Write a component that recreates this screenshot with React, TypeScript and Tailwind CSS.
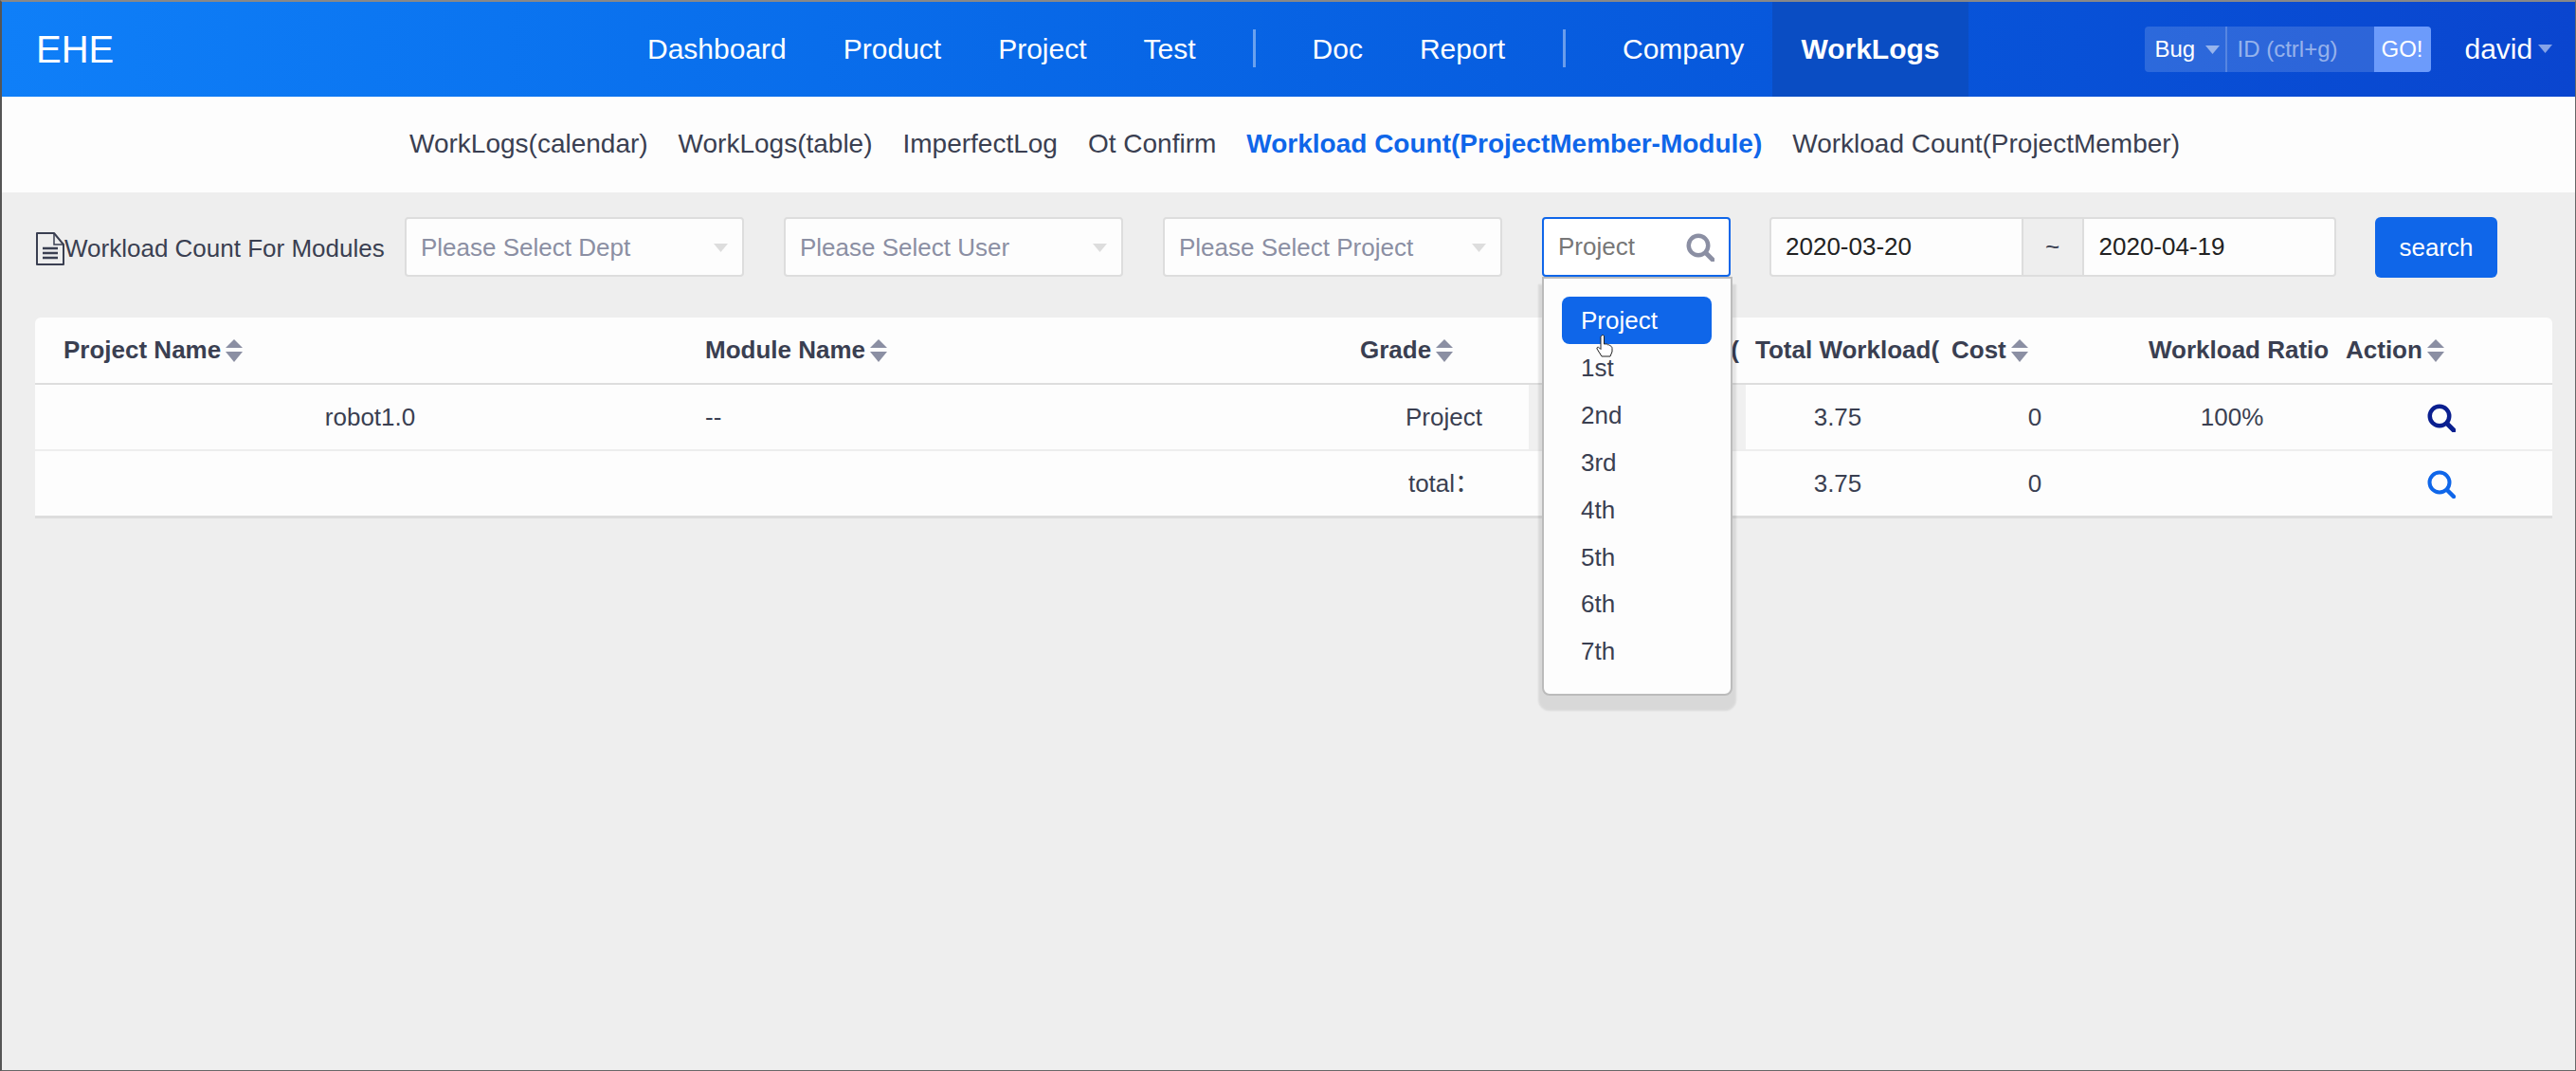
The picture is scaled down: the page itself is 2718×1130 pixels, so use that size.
const navLeft = ['Dashboard', 'Product', 'Project', 'Test']
const navMid = ['Doc', 'Report']
const levels = ['1st', '2nd', '3rd', '4th', '5th', '6th', '7th']
const gridCols = 'grid grid-cols-[677px_690px_209px_229px_208px_208px_208px_227px]'

const SortIcon = () => (
  <svg width="18" height="24" viewBox="0 0 18 24" className="ml-[5px] shrink-0">
    <path d="M9 0 L18 9 H0 Z" fill="#8b8fa3" />
    <path d="M9 24 L18 13 H0 Z" fill="#8b8fa3" />
  </svg>
)

const SearchIcon = ({ color, stroke, size }: { color: string; stroke: number; size: number }) => (
  <svg width={size} height={size} viewBox="0 0 30 30" fill="none">
    <circle cx="13" cy="13" r={12.5 - stroke / 2} stroke={color} strokeWidth={stroke} />
    <path d="M21 21 L28 28" stroke={color} strokeWidth={stroke + 0.5} strokeLinecap="round" />
  </svg>
)

const Caret = ({ className }: { className: string }) => (
  <svg width="15" height="9" viewBox="0 0 15 9" className={className}>
    <path d="M0 0 H15 L7.5 9 Z" fill="currentColor" />
  </svg>
)

const DocIcon = () => (
  <svg width="31" height="35" viewBox="0 0 31 35" fill="none" className="shrink-0">
    <path d="M2 1 H20 L30 13 V34 H2 Z" stroke="#3a3f51" strokeWidth="2" strokeLinejoin="round" />
    <path d="M20 1 V13 H30" stroke="#3a3f51" strokeWidth="1.5" />
    <path d="M8 17 H24 M8 22 H24 M8 27 H24" stroke="#3a3f51" strokeWidth="2.5" />
  </svg>
)

const HandCursor = () => (
  <svg width="18" height="24" viewBox="0 0 18 24" className="absolute left-[36px] top-[40px]">
    <path
      d="M6 1 C7 0 8.500 0.500 8.500 2 V10 L10 10 C11 9.500 12 10 12.500 11 C13.500 10.500 14.500 11 15 12 C16 12 17 13 17 14.500 V18 L15 23 H6 L1 15 C0.500 13.500 2 12.500 3.500 14 L5 15.500 V2.500 C5 2 5.500 1.500 6 1 Z"
      fill="#fff"
      stroke="#222"
      strokeWidth="1"
    />
  </svg>
)

const SelectBox = ({ label }: { label: string }) => (
  <div className="flex h-[63px] w-[358px] items-center justify-between rounded-[4px] border-2 border-[#ddd] bg-[#fdfdfd] pl-[15px] pr-[15px] pt-[1px] text-[26px] text-[#8b8fa3]">
    <span>{label}</span>
    <Caret className="text-[#ddd]" />
  </div>
)

const Th = ({ label, sort = true, className = '' }: { label: string; sort?: boolean; className?: string }) => (
  <div className={`flex items-center overflow-hidden whitespace-nowrap font-bold ${className}`}>
    <span>{label}</span>
    {sort && <SortIcon />}
  </div>
)

export default function App() {
  return (
    <div className="flex h-[1130px] w-[2718px] flex-col overflow-hidden border-t-2 border-r border-b border-l-2 border-t-[#888] border-r-[#666] border-b-[#666] border-l-[#555] bg-[#eee] font-['Liberation_Sans',sans-serif] text-[#3a3f51]">
      {/* top bar */}
      <header className="flex h-[100px] shrink-0 items-center bg-gradient-to-r from-[#0f7ff8] to-[#0a45cf] text-white">
        <div className="w-[681px] pl-[36px] text-[40px]">EHE</div>
        <nav className="flex h-full items-center pb-[2px] text-[30px]">
          {navLeft.map((n, i) => (
            <span key={n} className={i === 0 ? 'pr-[30px]' : 'px-[30px]'}>{n}</span>
          ))}
          <span className="ml-[30px] mr-[30px] h-[40px] w-[3px] bg-white/40" />
          {navMid.map((n) => (
            <span key={n} className="px-[30px]">{n}</span>
          ))}
          <span className="ml-[31px] mr-[30px] h-[40px] w-[3px] bg-white/40" />
          <span className="px-[30px]">Company</span>
          <span className="-mb-[2px] flex h-[100px] items-center bg-[#0a4dc3] px-[30px] pb-[2px] font-bold">WorkLogs</span>
        </nav>
        <div className="ml-[186px] flex h-[48px] w-[302px] items-center overflow-hidden rounded-[4px] bg-white/15 text-[24px]">
          <div className="flex h-full w-[87px] items-center border-r-2 border-white/20 pl-[11px]">
            <span>Bug</span>
            <Caret className="ml-[11px] text-white/50" />
          </div>
          <div className="flex-1 pl-[11px] text-white/50">ID (ctrl+g)</div>
          <div className="flex h-full w-[60px] items-center justify-center bg-[#6c9bfb]">GO!</div>
        </div>
        <div className="ml-[36px] flex items-center pb-[2px] text-[30px]">
          <span>david</span>
          <Caret className="ml-[6px] text-white/50" />
        </div>
      </header>

      {/* sub nav */}
      <div className="flex h-[101px] shrink-0 items-center justify-center gap-[32px] bg-[#fdfdfd] pb-[2px] pl-[13px] text-[28px]">
        <span>WorkLogs(calendar)</span>
        <span>WorkLogs(table)</span>
        <span>ImperfectLog</span>
        <span>Ot Confirm</span>
        <span className="font-bold text-[#0f66e9]">Workload Count(ProjectMember-Module)</span>
        <span>Workload Count(ProjectMember)</span>
      </div>

      {/* filters */}
      <div className="flex items-start pl-[35px] pt-[26px]">
        <div className="mr-[22px] flex h-[63px] w-[368px] items-center pt-[3px] text-[26px]">
          <DocIcon />
          <span className="whitespace-nowrap">Workload Count For Modules</span>
        </div>
        <div className="flex gap-[42px]">
          <SelectBox label="Please Select Dept" />
          <SelectBox label="Please Select User" />
          <SelectBox label="Please Select Project" />
        </div>
        <div className="relative ml-[42px] w-[199px]">
          <div className="flex h-[63px] items-center justify-between rounded-[4px] border-2 border-[#0f66e9] bg-white pl-[15px] pr-[15px] text-[26px] text-[#777]">
            <span>Project</span>
            <SearchIcon color="#8b8fa3" stroke={4.5} size={30} />
          </div>
          <div className="absolute left-0 top-[63px] z-10 h-[442px] w-[201px] rounded-b-[8px] border-2 border-[#bbb] bg-[#fdfdfd] pt-[19px] text-[26px] shadow-[0_12px_2px_4px_rgba(0,0,0,0.09)]">
            <div className="relative z-10 mx-[19px] mb-[1px] flex h-[50px] w-[158px] items-center rounded-[8px] bg-[#0f66e9] pl-[20px] text-white">
              Project
              <HandCursor />
            </div>
            {levels.map((l) => (
              <div key={l} className="flex h-[49.800px] items-center pl-[39px]">{l}</div>
            ))}
          </div>
        </div>
        <div className="ml-[41px] flex h-[63px] w-[598px] rounded-[4px] border-2 border-[#ddd] bg-[#fdfdfd] text-[26px] text-[#222]">
          <div className="flex flex-1 items-center pl-[15px]">2020-03-20</div>
          <div className="flex w-[66px] items-center justify-center border-x-2 border-[#ddd] bg-[#eee] text-[#3a3f51]">~</div>
          <div className="flex flex-1 items-center pl-[16px]">2020-04-19</div>
        </div>
        <button className="ml-[41px] h-[64px] w-[129px] rounded-[6px] bg-[#0f66e9] text-[26px] text-white">search</button>
      </div>

      {/* table */}
      <div className="ml-[35px] mt-[42px] w-[2656px] overflow-hidden rounded-t-[6px] bg-[#fdfdfd] text-[26px] shadow-[0_3px_0_#ddd]">
        <div className={`${gridCols} h-[71px] items-center border-b-2 border-[#ddd]`}>
          <Th label="Project Name" className="pl-[30px]" />
          <Th label="Module Name" className="pl-[30px]" />
          <Th label="Grade" className="pl-[31px]" />
          <Th label="Plan Workload(" sort={false} className="justify-end pr-[7px]" />
          <Th label="Total Workload(" sort={false} className="pl-[10px]" />
          <Th label="Cost" className="pl-[9px]" />
          <Th label="Workload Ratio" sort={false} className="pl-[9px]" />
          <Th label="Action" className="pl-[9px]" />
        </div>
        <div className={`${gridCols} h-[70px] items-center border-b-2 border-[#eee]`}>
          <div className="pl-[30px] text-center">robot1.0</div>
          <div className="pl-[30px]">--</div>
          <div className="pl-[30px] text-center">Project</div>
          <div className="flex h-full items-center justify-center bg-[#f0f0f0]">3.75</div>
          <div className="pl-[9px] pr-[23px] text-center">3.75</div>
          <div className="pl-[9px] pr-[23px] text-center">0</div>
          <div className="pl-[9px] pr-[23px] text-center">100%</div>
          <div className="flex justify-center pr-[8px] pt-[2px]">
            <SearchIcon color="#0a1f8f" stroke={4.5} size={30} />
          </div>
        </div>
        <div className={`${gridCols} h-[68px] items-center`}>
          <div />
          <div />
          <div className="pl-[30px] text-center font-['Liberation_Sans','Noto_Sans_CJK_SC',sans-serif]">total：</div>
          <div className="text-center">3.75</div>
          <div className="pl-[9px] pr-[23px] text-center">3.75</div>
          <div className="pl-[9px] pr-[23px] text-center">0</div>
          <div />
          <div className="flex justify-center pr-[8px] pt-[2px]">
            <SearchIcon color="#0f66e9" stroke={4} size={30} />
          </div>
        </div>
      </div>
    </div>
  )
}
